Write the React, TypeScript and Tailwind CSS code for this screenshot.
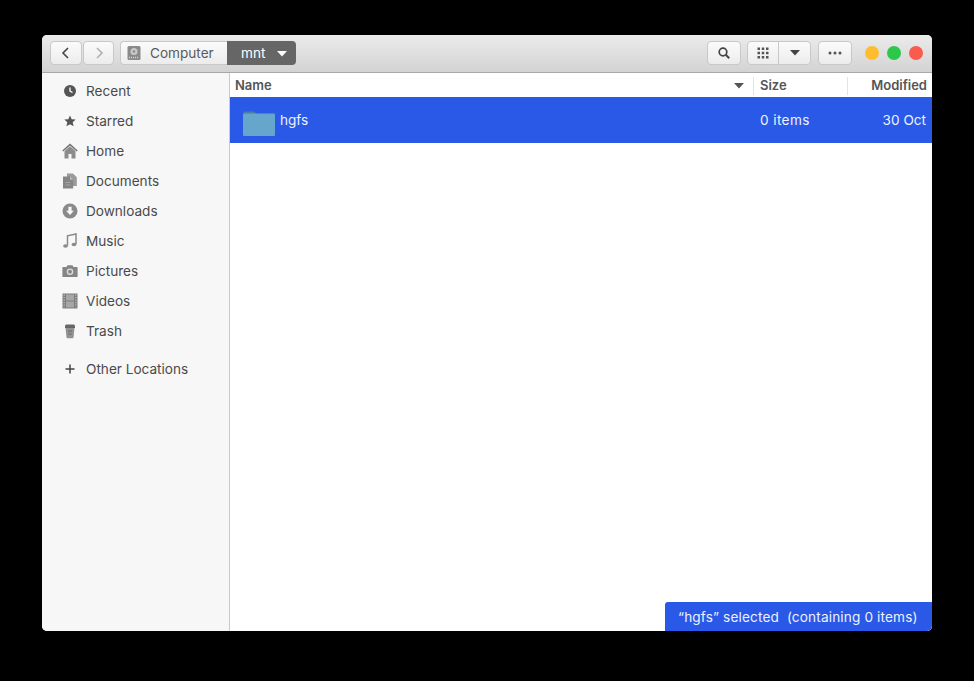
import React from 'react';

const iconClass = 'w-4 h-4 text-[#7a7a7a]';

const RecentIcon = () => (
	<svg viewBox="0 0 16 16" className="w-4 h-4 text-[#555]">
		<circle cx="8" cy="8" r="6" fill="currentColor" />
		<path d="M8 4.500V8l2.500 1.500" fill="none" stroke="#f7f7f7" strokeWidth="1.400" />
	</svg>
);
const StarIcon = () => (
	<svg viewBox="0 0 16 16" className="w-4 h-4 text-[#555]">
		<path d="M8 2.500l1.700 3.700 4 .4-3 2.700.9 4L8 11.200l-3.600 2.100.9-4-3-2.700 4-.4z" fill="currentColor" />
	</svg>
);
const HomeIcon = () => (
	<svg viewBox="0 0 16 16" className={iconClass}>
		<path d="M8 .5L.3 7.400l.9 1L8 2.400l6.800 6 .9-1z" fill="#707070" />
		<path d="M2.500 8L8 3.200 13.500 8v7.500H9.500v-4.500h-3v4.500h-4z" fill="#8c8c8c" />
	</svg>
);
const DocumentsIcon = () => (
	<svg viewBox="0 0 16 16" className={iconClass}>
		<path d="M5 .5h6l3.800 3.800V13H5z" fill="#9a9a9a" />
		<path d="M1 3.500h7l3.200 3.200V15.500H1z" fill="#858585" />
		<path d="M8 3.500v3.200h3.200z" fill="#bdbdbd" />
		<path d="M3.500 9.500h5M3.500 12h5" stroke="#a5a5a5" strokeWidth="1" />
	</svg>
);
const DownloadsIcon = () => (
	<svg viewBox="0 0 16 16" className={iconClass}>
		<circle cx="8" cy="8" r="7.500" fill="#8a8a8a" />
		<path d="M6.400 3.800h3.200v4h2.300L8 12 4.100 7.800h2.300z" fill="#f7f7f7" />
	</svg>
);
const MusicIcon = () => (
	<svg viewBox="0 0 16 16" className={iconClass}>
		<path d="M5.500 12.500V2.800L14 1v10" fill="none" stroke="#8a8a8a" strokeWidth="1.500" />
		<ellipse cx="3.500" cy="13" rx="2.400" ry="1.800" fill="#8a8a8a" />
		<ellipse cx="12" cy="11.500" rx="2.400" ry="1.800" fill="#8a8a8a" />
	</svg>
);
const PicturesIcon = () => (
	<svg viewBox="0 0 16 16" className={iconClass}>
		<path d="M1 4h3.500l1-1.800h5L11.500 4H15a.6.6 0 0 1 .6.6v8.800a.6.6 0 0 1-.6.6H1a.6.6 0 0 1-.6-.6V4.600A.6.6 0 0 1 1 4z" fill="#858585" />
		<circle cx="8" cy="8.700" r="3.300" fill="#dcdcdc" />
		<circle cx="8" cy="8.700" r="1.900" fill="#858585" />
	</svg>
);
const VideosIcon = () => (
	<svg viewBox="0 0 16 16" className={iconClass}>
		<rect x="0.500" y="0.500" width="15" height="15" fill="#7c7c7c" />
		<rect x="4" y="1.500" width="8" height="6" fill="#a6a6a6" />
		<rect x="4" y="8.500" width="8" height="6" fill="#a6a6a6" />
		<path d="M2.200 1.500v13M13.800 1.500v13" stroke="#b5b5b5" strokeWidth="1.500" strokeDasharray="1.200 1.300" />
	</svg>
);
const TrashIcon = () => (
	<svg viewBox="0 0 16 16" className={iconClass}>
		<path d="M3 2.500L4 1.500h8l1 1V5H3z" fill="#666" />
		<path d="M3.500 5h9l-1 9.500a1 1 0 0 1-1 .7h-5a1 1 0 0 1-1-.7z" fill="#929292" />
		<path d="M6 8h4M6.500 11h3" stroke="#666" strokeWidth="1.200" />
	</svg>
);
const PlusIcon = () => (
	<svg viewBox="0 0 16 16" className="w-4 h-4 text-[#444]">
		<path d="M8 3.500v9M3.500 8h9" stroke="currentColor" strokeWidth="1.500" />
	</svg>
);

const places = [
	{ label: 'Recent', icon: <RecentIcon /> },
	{ label: 'Starred', icon: <StarIcon /> },
	{ label: 'Home', icon: <HomeIcon /> },
	{ label: 'Documents', icon: <DocumentsIcon /> },
	{ label: 'Downloads', icon: <DownloadsIcon /> },
	{ label: 'Music', icon: <MusicIcon /> },
	{ label: 'Pictures', icon: <PicturesIcon /> },
	{ label: 'Videos', icon: <VideosIcon /> },
	{ label: 'Trash', icon: <TrashIcon /> },
];

const SidebarRow = ({ label, icon }: { label: string; icon: React.ReactNode }) => (
	<div className="flex h-[30px] items-center pl-5 gap-2 text-[13.6px] text-[#4a4a4a]">
		<span className="flex w-4 h-4 items-center justify-center">{icon}</span>
		<span>{label}</span>
	</div>
);

const Caret = ({ className }: { className: string }) => (
	<svg viewBox="0 0 10 6" className={`w-[10px] h-[6px] ${className}`}>
		<path d="M0 0h10L5 5.500z" fill="currentColor" />
	</svg>
);

const btn = 'flex items-center justify-center h-6 rounded-[4px] border border-[#c8c8c8] bg-gradient-to-b from-[#fbfbfb] to-[#ececec]';

export default function App() {
	return (
		<div className="min-h-[681px] bg-black pl-[42px] pt-[35px] font-['Inter',sans-serif]">
			<div className="relative flex h-[596px] w-[890px] flex-col overflow-hidden rounded-[5px] bg-white">
				{/* header bar */}
				<div className="flex h-[38px] shrink-0 items-center border-b border-[#a8a8a8] bg-gradient-to-b from-[#ebebeb] to-[#d3d3d3] pb-[2px] pl-2 pr-[9px]">
					<button className={`${btn} w-[32px]`}>
						<svg viewBox="0 0 16 16" className="w-4 h-4 text-[#444]">
							<path d="M10 3L5 8l5 5" fill="none" stroke="currentColor" strokeWidth="1.600" />
						</svg>
					</button>
					<button className={`${btn} ml-[1px] w-[31px]`}>
						<svg viewBox="0 0 16 16" className="w-4 h-4 text-[#b0b0b0]">
							<path d="M6 3l5 5-5 5" fill="none" stroke="currentColor" strokeWidth="1.600" />
						</svg>
					</button>
					<div className="ml-[6px] flex h-6 text-[13.6px]">
						<div className="flex w-[107px] items-center rounded-l-[4px] border border-r-0 border-[#c8c8c8] bg-gradient-to-b from-[#fbfbfb] to-[#ececec] pl-[5px] pt-[1px] text-[#5a5a5a]">
							<svg viewBox="0 0 16 16" className="w-4 h-4">
								<rect x="1.500" y="1" width="13" height="14" rx="1.500" fill="#8a8a8a" />
								<circle cx="8" cy="6.500" r="3.500" fill="#c9c9c9" />
								<circle cx="8" cy="6.500" r="1.200" fill="#8a8a8a" />
								<path d="M3 12.500h10" stroke="#d5d5d5" strokeWidth="1.500" strokeDasharray="1 1" />
							</svg>
							<span className="ml-[8px] pt-[1px]">Computer</span>
						</div>
						<div className="flex w-[69px] items-center rounded-r-[4px] bg-[#666] pl-[14px] pt-[2px] text-white">
							<span>mnt</span>
							<Caret className="ml-[12px] text-white" />
						</div>
					</div>
					<button className={`${btn} ml-auto w-[34px]`}>
						<svg viewBox="0 0 16 16" className="w-4 h-4 text-[#444]">
							<circle cx="7" cy="7" r="3.800" fill="none" stroke="currentColor" strokeWidth="1.700" />
							<path d="M9.800 9.800l3.400 3.400" stroke="currentColor" strokeWidth="2" />
						</svg>
					</button>
					<div className={`${btn} ml-[6px] w-[64px]`}>
						<span className="flex h-full w-[31px] items-center justify-center border-r border-[#c8c8c8]">
							<svg viewBox="0 0 12 12" className="w-3 h-3 text-[#555]" fill="currentColor">
								<rect x="0.500" y="0.500" width="2.500" height="2.500" />
								<rect x="4.750" y="0.500" width="2.500" height="2.500" />
								<rect x="9" y="0.500" width="2.500" height="2.500" />
								<rect x="0.500" y="4.750" width="2.500" height="2.500" />
								<rect x="4.750" y="4.750" width="2.500" height="2.500" />
								<rect x="9" y="4.750" width="2.500" height="2.500" />
								<rect x="0.500" y="9" width="2.500" height="2.500" />
								<rect x="4.750" y="9" width="2.500" height="2.500" />
								<rect x="9" y="9" width="2.500" height="2.500" />
							</svg>
						</span>
						<span className="flex flex-1 items-center justify-center">
							<Caret className="text-[#444]" />
						</span>
					</div>
					<button className={`${btn} ml-[7px] w-[34px]`}>
						<svg viewBox="0 0 14 4" className="w-[14px] h-1 text-[#555]" fill="currentColor">
							<circle cx="2" cy="2" r="1.500" />
							<circle cx="7" cy="2" r="1.500" />
							<circle cx="12" cy="2" r="1.500" />
						</svg>
					</button>
					<div className="ml-[13px] flex gap-2">
						<span className="h-[14px] w-[14px] rounded-full bg-[#fdbd2e]" />
						<span className="h-[14px] w-[14px] rounded-full bg-[#2dc84a]" />
						<span className="h-[14px] w-[14px] rounded-full bg-[#fb5a4f]" />
					</div>
				</div>

				<div className="flex min-h-0 flex-1">
					{/* places sidebar */}
					<div className="w-[188px] shrink-0 border-r border-[#c9c9c9] bg-[#f7f7f7] pt-[3px]">
						{places.map(p => (
							<SidebarRow key={p.label} label={p.label} icon={p.icon} />
						))}
						<div className="mt-[8px]">
							<SidebarRow label="Other Locations" icon={<PlusIcon />} />
						</div>
					</div>

					{/* file list */}
					<div className="relative min-w-0 flex-1 bg-white">
						<div className="flex h-6 items-center pt-[2px] text-[13px] font-semibold text-[#555]">
							<div className="flex h-[18px] w-[524px] items-center justify-between border-r border-[#e3e3e3] pl-[5px] pr-[9px]">
								<span>Name</span>
								<Caret className="text-[#555]" />
							</div>
							<div className="flex h-[18px] w-[94px] items-center border-r border-[#e3e3e3] pl-[6px]">Size</div>
							<div className="flex-1 pr-[5px] text-right">Modified</div>
						</div>
						<div className="flex h-[46px] items-center bg-[#2a59e8] text-[13.6px] text-[#eef2fd]">
							<div className="flex w-[524px] items-center pl-[13px]">
								<svg viewBox="0 0 32 25" className="mt-[7px] h-[25px] w-8">
									<path d="M0 2.500a2 2 0 0 1 2-2h9l3 2.500z" fill="#4a7fa8" />
									<rect x="0" y="2.500" width="32" height="22.500" rx="1" fill="#66a6cc" />
								</svg>
								<span className="ml-[5px]">hgfs</span>
							</div>
							<div className="w-[94px] pl-[6px] tracking-[0.4px]">0 items</div>
							<div className="flex-1 pr-[6px] text-right">30 Oct</div>
						</div>
						<div className="absolute bottom-0 right-0 flex h-[29px] w-[267px] items-center rounded-tl-[3px] bg-[#2a59e8] pl-[13px] pt-[2px] text-[13.6px] tracking-[0.15px] text-[#eef2fd]">
							“hgfs” selected&nbsp; (containing 0 items)
						</div>
					</div>
				</div>
			</div>
		</div>
	);
}
